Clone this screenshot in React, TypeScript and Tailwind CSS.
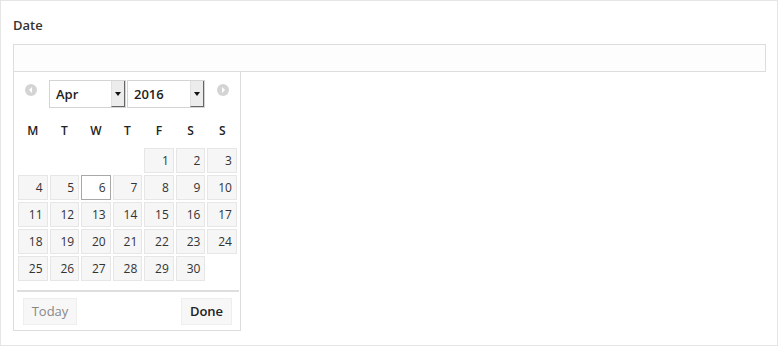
import React from "react";

const Circle = ({ dir }: { dir: "l" | "r" }) => (
  <svg width="12" height="12" viewBox="0 0 12 12" className="block">
    <circle cx="6" cy="6" r="6" fill="#d4d4d4" />
    {dir === "l" ? (
      <polygon points="7,3 4,6 7,9" fill="#ffffff" />
    ) : (
      <polygon points="5,3 8,6 5,9" fill="#ffffff" />
    )}
  </svg>
);

const Select = ({ value, w }: { value: string; w: string }) => (
  <div className={`${w} h-[28px] border border-[#d4d4d4] bg-white flex`}>
    <div className="flex-1 pl-[6px] text-[13px] font-semibold leading-[26px] text-[#222]">{value}</div>
    <div className="w-[14px] h-full bg-[#ececec] border-l border-[#e0e0e0] border-r border-r-[#666] border-b border-b-[#666] flex items-center justify-center">
      <svg width="6" height="4" viewBox="0 0 6 4" className="block">
        <polygon points="0,0 6,0 3,4" fill="#111" />
      </svg>
    </div>
  </div>
);

export default function App() {
  const days: (number | null)[] = [null, null, null, null];
  for (let i = 1; i <= 30; i++) days.push(i);
  days.push(null);
  const heads = ["M", "T", "W", "T", "F", "S", "S"];
  return (
    <div className="w-[778px] h-[346px] border border-[#e5e5e5] bg-white relative font-['Open_Sans',sans-serif] text-[#333]">
      <div className="pl-[12px] pt-[15px]">
        <div className="text-[13px] font-semibold leading-[18px] text-[#333] mb-[10px]">Date</div>
        <div className="w-[753px] h-[28px] border border-[#dddddd] bg-[#fdfdfd]" />
      </div>
      <div className="absolute left-[12px] top-[70px] w-[228px] h-[260px] border border-[#dddddd] bg-white">
        <div className="pt-[8px] flex items-start pl-[11px]">
          <div className="mt-[4px]">
            <Circle dir="l" />
          </div>
          <div className="ml-[12px] flex gap-[1px]">
            <Select value="Apr" w="w-[77px]" />
            <Select value="2016" w="w-[78px]" />
          </div>
          <div className="mt-[4px] ml-[12px]">
            <Circle dir="r" />
          </div>
        </div>
        <div className="ml-[3px] w-[221px] mt-[9px] grid grid-cols-7 h-[28px]">
          {heads.map((h, i) => (
            <div key={i} className="flex items-center justify-center text-[12px] font-semibold text-[#222]">
              {h}
            </div>
          ))}
        </div>
        <div className="ml-[3px] w-[221px] mt-[2px] grid grid-cols-7">
          {days.map((d, i) => (
            <div key={i} className="h-[27px] p-[1px]">
              {d !== null && (
                <div
                  className={`h-full border ${
                    d === 6 ? "border-[#a8a8a8] bg-white" : "border-[#e6e6e6] bg-[#f6f6f6]"
                  } text-right pr-[4px] text-[12px] leading-[23px] text-[#333]`}
                >
                  {d}
                </div>
              )}
            </div>
          ))}
        </div>
        <div className="ml-[3px] mr-[1px] mt-[8px] border-t-2 border-[#dedede]" />
        <div className="mt-[6px] flex justify-between pl-[9px] pr-[8px]">
          <div className="w-[54px] h-[27px] border border-[#eeeeee] bg-[#f7f7f7] flex items-center justify-center text-[13px] text-[#888]">
            Today
          </div>
          <div className="w-[51px] h-[27px] border border-[#eeeeee] bg-[#f7f7f7] flex items-center justify-center text-[13px] font-semibold text-[#222]">
            Done
          </div>
        </div>
      </div>
    </div>
  );
}
